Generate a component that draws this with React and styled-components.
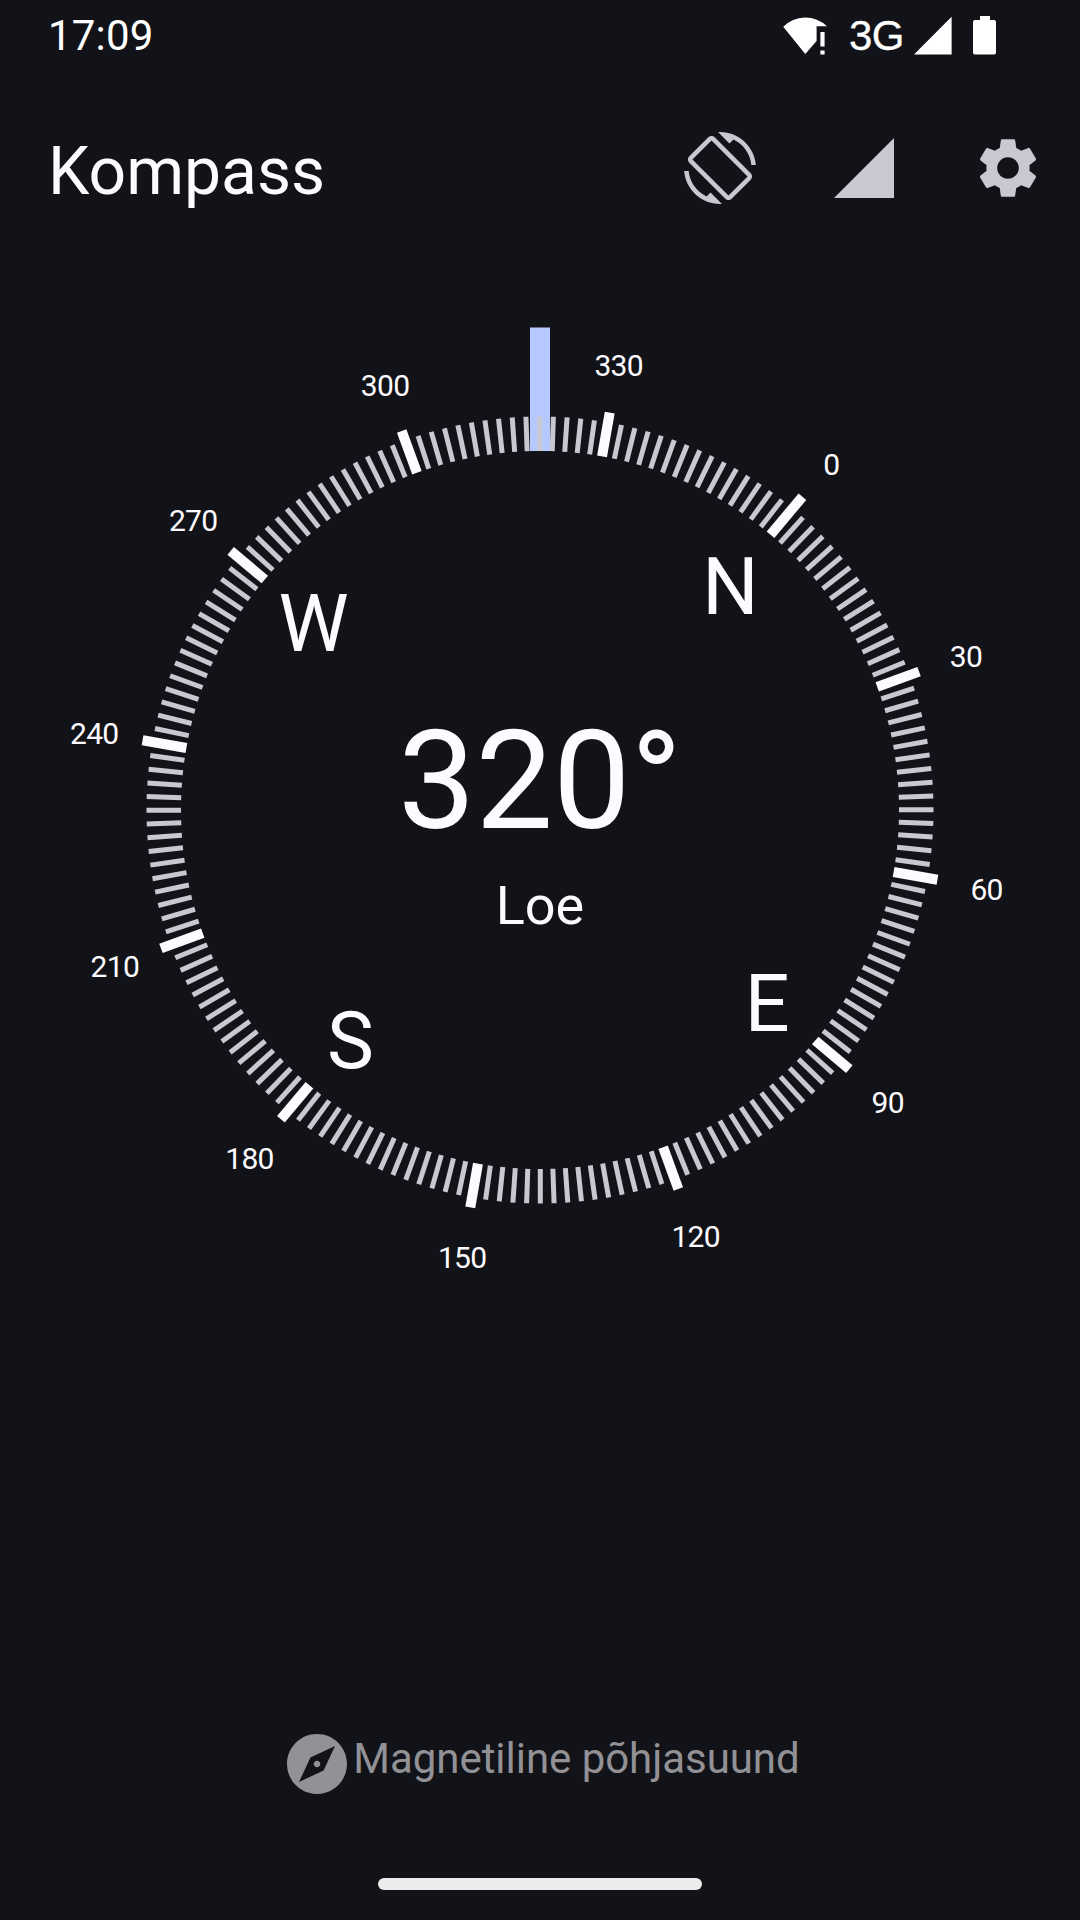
import React from "react";
import styled, { createGlobalStyle } from "styled-components";
import {
  MdScreenRotation,
  MdSignalCellular4Bar,
  MdSettings,
  MdExplore,
} from "react-icons/md";

const GlobalStyle = createGlobalStyle`
  body {
    margin: 0;
    background: #121318;
  }
`;

const Screen = styled.div`
  display: flex;
  flex-direction: column;
  width: 1080px;
  height: 1920px;
  overflow: hidden;
  background: #121318;
  color: #fdfbff;
  font-family: Roboto, "Liberation Sans", sans-serif;
`;

const StatusBar = styled.header`
  display: flex;
  align-items: center;
  justify-content: space-between;
  box-sizing: border-box;
  height: 72px;
  padding: 0 84px 0 48px;
  color: #ffffff;
`;

const Clock = styled.span`
  font-size: 42px;
  line-height: 72px;
  letter-spacing: 0.2px;
`;

const StatusIcons = styled.div`
  display: flex;
  align-items: center;
`;

const Network = styled.span`
  width: 55px;
  margin: 0 9px 0 22px;
  font-family: "Liberation Sans", Arial, sans-serif;
  font-size: 42px;
  line-height: 72px;
  letter-spacing: -0.5px;
  -webkit-text-stroke: 0.3px #ffffff;
`;

const StatusGlyph = styled.svg`
  display: block;
  fill: #ffffff;
  margin-right: ${(p) => p.$after || 0}px;
`;

const TitleBar = styled.div`
  display: flex;
  align-items: center;
  justify-content: space-between;
  box-sizing: border-box;
  height: 192px;
  padding: 0 36px 0 48px;
`;

const Title = styled.h1`
  margin: 0;
  padding-top: 7px;
  font-size: 66px;
  font-weight: 400;
  line-height: 80px;
`;

const Actions = styled.div`
  display: flex;
  gap: 72px;
`;

const IconButton = styled.button`
  display: flex;
  padding: 0;
  border: 0;
  background: none;
  color: #c8c8d2;
  font-size: 72px;
`;

const Dial = styled.main`
  display: grid;
  height: 1092px;
`;

const DialFace = styled.svg`
  grid-area: 1 / 1;
  display: block;
`;

const Needle = styled.rect`
  fill: #b6c8ff;
`;

const Tick = styled.rect`
  fill: ${(p) => (p.$major ? "#fdfbff" : "#c8c8d2")};
`;

const DialText = styled.text`
  fill: #fdfbff;
  font-size: ${(p) => p.$size}px;
  letter-spacing: ${(p) => p.$tracking}px;
  text-anchor: middle;
`;

const Reading = styled.div`
  grid-area: 1 / 1;
  display: flex;
  flex-direction: column;
  align-items: center;
  padding-top: 437px;
`;

const Degrees = styled.div`
  font-size: 138px;
  line-height: 160px;
`;

const Direction = styled.div`
  margin-top: 13px;
  font-size: 54px;
  line-height: 64px;
`;

const NorthType = styled.footer`
  display: flex;
  align-items: center;
  justify-content: center;
  box-sizing: border-box;
  height: 72px;
  margin-top: 372px;
  padding-left: 1px;
  color: #919196;
  font-size: 42px;
`;

const NorthLabel = styled.span`
  padding-bottom: 10px;
  line-height: 50px;
  letter-spacing: -0.04px;
`;

const HomeHandle = styled.div`
  align-self: center;
  width: 324px;
  height: 12px;
  margin-top: 78px;
  border-radius: 6px;
  background: #ececec;
`;

const AZIMUTH = 320.05;
const CENTER = { x: 540, y: 546 };
const TICKS = Array.from({ length: 180 }, (_, i) => i * 2);
const LABELS = Array.from({ length: 12 }, (_, i) => i * 30);
const CARDINALS = [
  ["N", 0],
  ["E", 90],
  ["S", 180],
  ["W", 270],
];

function tickRadius(deg) {
  if (deg === 0) return 408.7;
  return deg % 30 === 0 ? 403.5 : 393.5;
}

function polar(degrees, radius) {
  const a = ((degrees - AZIMUTH) * Math.PI) / 180;
  return {
    x: CENTER.x + radius * Math.sin(a),
    y: CENTER.y - radius * Math.cos(a),
  };
}

function DialMark({ degrees, radius, size, drop, tracking = 0, children }) {
  const { x, y } = polar(degrees, radius);
  return (
    <DialText
      x={x + 0.4}
      y={y + size * 0.3555 + drop}
      $size={size}
      $tracking={tracking}
    >
      {children}
    </DialText>
  );
}

function CompassDial() {
  return (
    <DialFace width="1080" height="1092" viewBox="0 0 1080 1092">
      <Needle x="530" y="63.5" width="20" height="123.5" />
      {TICKS.map((deg) => {
        const major = deg % 30 === 0;
        const width = major ? 10 : 5;
        const outer = tickRadius(deg);
        return (
          <Tick
            key={deg}
            $major={major}
            x={CENTER.x - width / 2}
            y={CENTER.y - outer}
            width={width}
            height={outer - 359}
            transform={`rotate(${deg - AZIMUTH} ${CENTER.x} ${CENTER.y})`}
          />
        );
      })}
      {LABELS.map((deg) => (
        <DialMark
          key={deg}
          degrees={deg}
          radius={453}
          size={30}
          drop={1.2}
          tracking={-0.7}
        >
          {deg}
        </DialMark>
      ))}
      {CARDINALS.map(([name, deg]) => (
        <DialMark key={name} degrees={deg} radius={296} size={79} drop={2.7}>
          {name}
        </DialMark>
      ))}
    </DialFace>
  );
}

export default function App() {
  return (
    <Screen>
      <GlobalStyle />
      <StatusBar>
        <Clock>17:09</Clock>
        <StatusIcons>
          <StatusGlyph width="44" height="40" viewBox="783 16 44 40">
            <path d="M783.2 26.8A31 31 0 0 1 827 26.2H816.6V41L805.3 54Z" />
            <path d="M820.4 32h4.2v14.6h-4.2zM820.4 50.4h4.2v4h-4.2z" />
          </StatusGlyph>
          <Network>3G</Network>
          <StatusGlyph $after={21} width="39" height="40" viewBox="913 16 39 40">
            <path d="M914 54.4H951.6V16.8Z" />
          </StatusGlyph>
          <StatusGlyph width="23" height="40" viewBox="973 16 23 40">
            <path d="M980 16h10v4h4a2 2 0 0 1 2 2v30.5a2 2 0 0 1-2 2h-19a2 2 0 0 1-2-2V22a2 2 0 0 1 2-2h5z" />
          </StatusGlyph>
        </StatusIcons>
      </StatusBar>
      <TitleBar>
        <Title>Kompass</Title>
        <Actions>
          <IconButton aria-label="Pööra">
            <MdScreenRotation />
          </IconButton>
          <IconButton aria-label="Signaal">
            <MdSignalCellular4Bar />
          </IconButton>
          <IconButton aria-label="Seaded">
            <MdSettings />
          </IconButton>
        </Actions>
      </TitleBar>
      <Dial>
        <CompassDial />
        <Reading>
          <Degrees>320°</Degrees>
          <Direction>Loe</Direction>
        </Reading>
      </Dial>
      <NorthType>
        <MdExplore size={72} />
        <NorthLabel>Magnetiline põhjasuund</NorthLabel>
      </NorthType>
      <HomeHandle />
    </Screen>
  );
}
